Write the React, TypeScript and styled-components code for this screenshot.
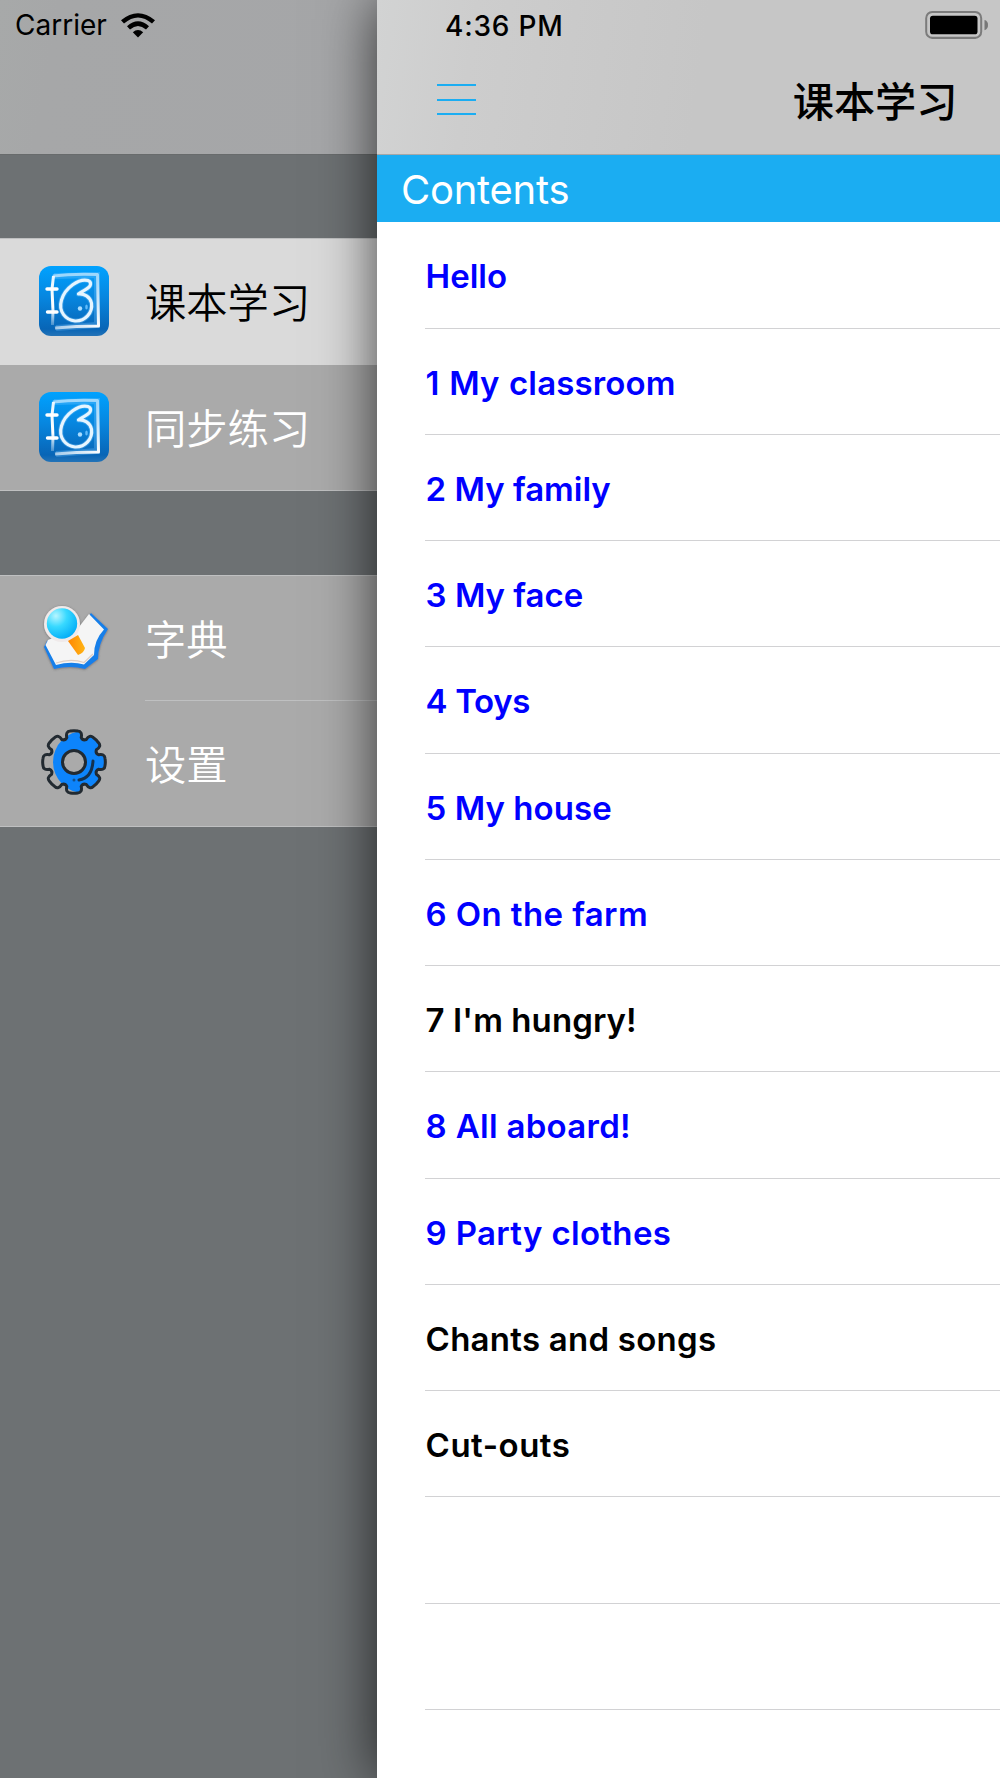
import React from 'react';
import styled, { createGlobalStyle } from 'styled-components';

const Global = createGlobalStyle`
  * { box-sizing: border-box; }
  body { margin: 0; background: #6d7173; }
`;

const latin = `Inter, "Liberation Sans", "Noto Sans CJK SC", sans-serif`;
const cjk = `"Noto Sans CJK SC", Inter, sans-serif`;

const Screen = styled.div`
  display: flex;
  width: 1000px;
  height: 1778px;
  overflow: hidden;
  background: #6d7173;
  font-family: ${latin};
`;

const Drawer = styled.aside`
  width: 377px;
  flex: none;
`;

const DrawerHeader = styled.header`
  height: 155px;
  padding: 8px 0 0 15px;
  background: linear-gradient(100deg, #a7a9a9 0, #a6a7a8 60px, #a5a6a8 100%);
  border-bottom: 1px solid #686b6c;
`;

const StatusLeft = styled.div`
  display: flex;
  align-items: center;
  gap: 14px;
  height: 34px;
`;

const StatusText = styled.span<{ $weight: number; $spacing: number }>`
  font-size: 28px;
  line-height: 34px;
  font-weight: ${p => p.$weight};
  letter-spacing: ${p => p.$spacing}px;
  white-space: nowrap;
  color: #000;
`;

const Group = styled.nav<{ $gap: number }>`
  margin-top: ${p => p.$gap}px;
  border-top: 1px solid #bfc0c1;
  border-bottom: 1px solid #bfc0c1;
`;

const Item = styled.div<{ $active?: boolean }>`
  display: flex;
  height: ${p => (p.$active ? 126 : 125)}px;
  background: ${p => (p.$active ? '#dadada' : '#aaaaaa')};
  color: ${p => (p.$active ? '#000' : '#fff')};
`;

const IconCell = styled.div`
  width: 145px;
  flex: none;
  padding: 26px 0 0 38px;
`;

const ItemLabel = styled.div<{ $line?: boolean }>`
  flex: 1;
  font-family: ${cjk};
  font-size: 41.3px;
  font-weight: 350;
  line-height: 123px;
  border-bottom: ${p => (p.$line ? '1px solid #bfc0c1' : 'none')};
`;

const Panel = styled.main`
  position: relative;
  width: 623px;
  flex: none;
  background: #fff;
  box-shadow: 0 0 54px rgba(0, 0, 0, 0.7);
`;

const PanelHeader = styled.header`
  height: 155px;
  background: linear-gradient(98deg, #d2d3d3 0, #cdcdcd 100px, #c6c6c6 330px, #c6c6c6 100%);
  border-bottom: 1px solid #a5a7a8;
`;

const StatusRight = styled.div`
  display: flex;
  justify-content: space-between;
  height: 60px;
  padding: 8.5px 11.5px 0 68px;
`;

const TitleRow = styled.div`
  display: flex;
  justify-content: space-between;
  padding: 0 42.5px 0 60px;
`;

const MenuButton = styled.button`
  display: flex;
  flex-direction: column;
  gap: 12.5px;
  width: 39px;
  padding: 24px 0 0;
  border: 0;
  background: none;
`;

const Bar = styled.span`
  height: 2px;
  flex: none;
  background: #1badf2;
`;

const Title = styled.h1`
  margin: 0;
  font-family: ${cjk};
  font-size: 41.2px;
  font-weight: 500;
  line-height: 79px;
  color: #000;
`;

const Section = styled.h2`
  height: 67px;
  margin: 0;
  padding-left: 24px;
  background: #1badf2;
  color: #fff;
  font-size: 40px;
  font-weight: 400;
  line-height: 70px;
  letter-spacing: -0.25px;
`;

const List = styled.ul`
  margin: 0;
  padding: 0.4px 0 0 48px;
  list-style: none;
`;

const Row = styled.li<{ $blue?: boolean; $spacing: number; $word?: number }>`
  height: 106.25px;
  border-bottom: 1px solid #d2d2d4;
  color: ${p => (p.$blue ? '#0000ff' : '#000')};
  font-size: 33px;
  font-weight: 600;
  line-height: 109px;
  text-indent: 0.6px;
  letter-spacing: ${p => p.$spacing}px;
  word-spacing: ${p => p.$word ?? 0}px;
  white-space: nowrap;
`;

const Wifi = () => (
  <svg width="34" height="25" viewBox="0 0 34 25">
    <path d="M0 7.3Q17 -6.8 34 7.3L31 10.6Q17 -1.6 3 10.6Z" />
    <path d="M6 13.2Q17 3.4 28 13.2L25 16.4Q17 9.4 9 16.4Z" />
    <path d="M11.8 19.2Q17 14.8 22.2 19.2L17 24.5Z" />
  </svg>
);

const Battery = () => (
  <svg width="64" height="30" viewBox="0 0 64 29" preserveAspectRatio="none">
    <rect x="1.2" y="2.9" width="55" height="25" rx="6" fill="none" stroke="#7b7b7b" strokeWidth="2" />
    <rect x="5" y="6.5" width="47.5" height="18" rx="2.8" />
    <path d="M59.5 10.7Q63 11.5 63 15.5T59.5 20.5Z" fill="#777" />
  </svg>
);

const BookIcon = () => (
  <svg width="72" height="72" viewBox="0 0 72 72">
    <defs>
      <linearGradient id="book" x2="0" y2="1">
        <stop stopColor="#00a2ff" />
        <stop offset=".45" stopColor="#0786df" />
        <stop offset=".9" stopColor="#0865b6" />
        <stop offset="1" stopColor="#2473b7" />
      </linearGradient>
      <linearGradient id="chalk" y2="1">
        <stop stopColor="#fff" stopOpacity=".55" />
        <stop offset=".5" stopColor="#fff" stopOpacity=".55" />
        <stop offset="1" stopColor="#fff" />
      </linearGradient>
      <linearGradient id="spine" gradientUnits="userSpaceOnUse" x1="0" y1="9" x2="0" y2="64">
        <stop stopColor="#fff" stopOpacity=".9" />
        <stop offset=".6" stopColor="#fff" />
        <stop offset="1" stopColor="#fff" stopOpacity=".1" />
      </linearGradient>
    </defs>
    <rect x="1" y="1" width="70" height="70" rx="12" fill="url(#book)" />
    <path d="M16 11L59 10V60L18 63" fill="none" stroke="#7bc7ff" strokeWidth="6" opacity=".3" />
    <path d="M15 11Q35 8.5 59.5 9.5L60.5 61Q38 61 17 63" fill="none" stroke="url(#chalk)" strokeWidth="3" strokeLinejoin="round" />
    <path d="M15.5 11L14 24L15 46L14.5 60" fill="none" stroke="url(#spine)" strokeWidth="3" />
    <path d="M9 24H19M9.5 47H19" fill="none" stroke="#fff" strokeWidth="3.4" strokeLinecap="round" />
    <path d="M50 15.5C41 13 27 23 23.5 35C20 47 28 55 37 56C47 56.5 55 48 53.5 38C52 31.5 46 28.5 40.5 29C45 25 52 24 52.5 19.5Q53 16.5 50 15.5Z" fill="none" stroke="#73c3fb" strokeWidth="5" strokeLinejoin="round" opacity=".4" />
    <path d="M50 15.5C41 13 27 23 23.5 35C20 47 28 55 37 56C47 56.5 55 48 53.5 38C52 31.5 46 28.5 40.5 29C45 25 52 24 52.5 19.5Q53 16.5 50 15.5Z" fill="none" stroke="#e6f5ff" strokeWidth="3.2" strokeLinejoin="round" />
    <circle cx="42" cy="43.5" r="2.2" fill="#a8dcff" />
    <ellipse cx="48.5" cy="42" rx="1.3" ry="2.5" fill="#62bbfa" />
  </svg>
);

const DictionaryIcon = () => (
  <svg width="72" height="72" viewBox="0 0 72 72">
    <defs>
      <radialGradient id="lens" cx=".3" cy=".25" r=".8">
        <stop stopColor="#b8f5ff" />
        <stop offset=".45" stopColor="#38d9ff" />
        <stop offset="1" stopColor="#05aef7" />
      </radialGradient>
      <linearGradient id="handle">
        <stop stopColor="#ff8700" />
        <stop offset="1" stopColor="#ffb516" />
      </linearGradient>
      <filter id="iconShadow" x="-.2" y="-.2" width="1.4" height="1.4">
        <feDropShadow dx="0" dy=".5" stdDeviation="1" floodColor="#555" floodOpacity=".7" />
      </filter>
    </defs>
    <g filter="url(#iconShadow)">
      <path d="M9 39L6 45L16 67Q32 63 47 67L60 57Q60 42 70 27L53 11L43 24Z" fill="#167fe9" />
      <path d="M10 38L7.5 43L18 63Q33 59 46 62.5L56 53Q56 38 66 27.5L51 12L41 25Z" fill="#f5f5f5" />
      <path d="M18 61Q33 56 46 60.5L55 52" fill="none" stroke="#dfcfc5" strokeWidth="1.3" />
      <circle cx="24" cy="22" r="18" fill="#f0eaea" />
    </g>
    <circle cx="24" cy="21.5" r="15.2" fill="url(#lens)" />
    <path d="M30 39L40 33L47 46Q46 51 40 53Z" fill="url(#handle)" />
  </svg>
);

const toothAngles = [0, 45, 90, 135, 180, 225, 270, 315];

// The cog outline repeats one rounded tooth and one inner notch every 45 degrees.
const gearPath = (() => {
  const pt = (r: number, deg: number) => {
    const a = (deg * Math.PI) / 180;
    return `${(36 + r * Math.sin(a)).toFixed(2)} ${(35 - r * Math.cos(a)).toFixed(2)}`;
  };
  return (
    toothAngles
      .map((a, i) =>
        `${i ? 'L' : 'M'}${pt(25.5, a - 16.5)}Q${pt(31.8, a - 15.5)} ${pt(31.2, a - 7)}` +
        `Q${pt(31.7, a)} ${pt(31.2, a + 7)}Q${pt(31.8, a + 15.5)} ${pt(25.5, a + 16.5)}Q${pt(23, a + 22.5)} ${pt(25.5, a + 28.5)}`)
      .join('') + 'Z'
  );
})();

const GearIcon = () => (
  <svg width="72" height="72" viewBox="0 0 72 72">
    <defs>
      <clipPath id="gearClip">
        <path d={gearPath} />
      </clipPath>
    </defs>
    <circle cx="46" cy="35" r="31" fill="#0d84fb" clipPath="url(#gearClip)" />
    <path d={gearPath} fill="none" stroke="#222a31" strokeWidth="3" />
    <circle cx="36" cy="35" r="11.5" fill="#aaa" stroke="#222a31" strokeWidth="3" />
    <path d="M55 34Q54 51 41 53" fill="none" stroke="#14314e" strokeWidth="3" strokeLinecap="round" />
    <circle cx="36" cy="53" r="1.5" fill="#14508b" />
  </svg>
);

const rows = [
  { text: 'Hello', blue: true, spacing: 0 },
  { text: '1 My classroom', blue: true, spacing: 0.14, word: 1 },
  { text: '2 My family', blue: true, spacing: 0 },
  { text: '3 My face', blue: true, spacing: 0 },
  { text: '4 Toys', blue: true, spacing: -0.35 },
  { text: '5 My house', blue: true, spacing: 0.05 },
  { text: '6 On the farm', blue: true, spacing: 0.39 },
  { text: "7 I'm hungry!", blue: false, spacing: 0.08 },
  { text: '8 All aboard!', blue: true, spacing: 0.3 },
  { text: '9 Party clothes', blue: true, spacing: 0.33 },
  { text: 'Chants and songs', blue: false, spacing: 0.25 },
  { text: 'Cut-outs', blue: false, spacing: 0.5 },
  { text: '', blue: false, spacing: 0 },
  { text: '', blue: false, spacing: 0 },
];

export default function App() {
  return (
    <>
      <Global />
      <Screen>
        <Drawer>
          <DrawerHeader>
            <StatusLeft>
              <StatusText $weight={400} $spacing={0}>Carrier</StatusText>
              <Wifi />
            </StatusLeft>
          </DrawerHeader>
          <Group $gap={83}>
            <Item $active>
              <IconCell><BookIcon /></IconCell>
              <ItemLabel>课本学习</ItemLabel>
            </Item>
            <Item>
              <IconCell><BookIcon /></IconCell>
              <ItemLabel>同步练习</ItemLabel>
            </Item>
          </Group>
          <Group $gap={84}>
            <Item>
              <IconCell><DictionaryIcon /></IconCell>
              <ItemLabel $line>字典</ItemLabel>
            </Item>
            <Item>
              <IconCell><GearIcon /></IconCell>
              <ItemLabel>设置</ItemLabel>
            </Item>
          </Group>
        </Drawer>
        <Panel>
          <PanelHeader>
            <StatusRight>
              <StatusText $weight={500} $spacing={0.8}>4:36 PM</StatusText>
              <Battery />
            </StatusRight>
            <TitleRow>
              <MenuButton aria-label="Menu"><Bar /><Bar /><Bar /></MenuButton>
              <Title>课本学习</Title>
            </TitleRow>
          </PanelHeader>
          <Section>Contents</Section>
          <List>
            {rows.map((r, i) => (
              <Row key={i} $blue={r.blue} $spacing={r.spacing} $word={r.word}>{r.text}</Row>
            ))}
          </List>
        </Panel>
      </Screen>
    </>
  );
}
